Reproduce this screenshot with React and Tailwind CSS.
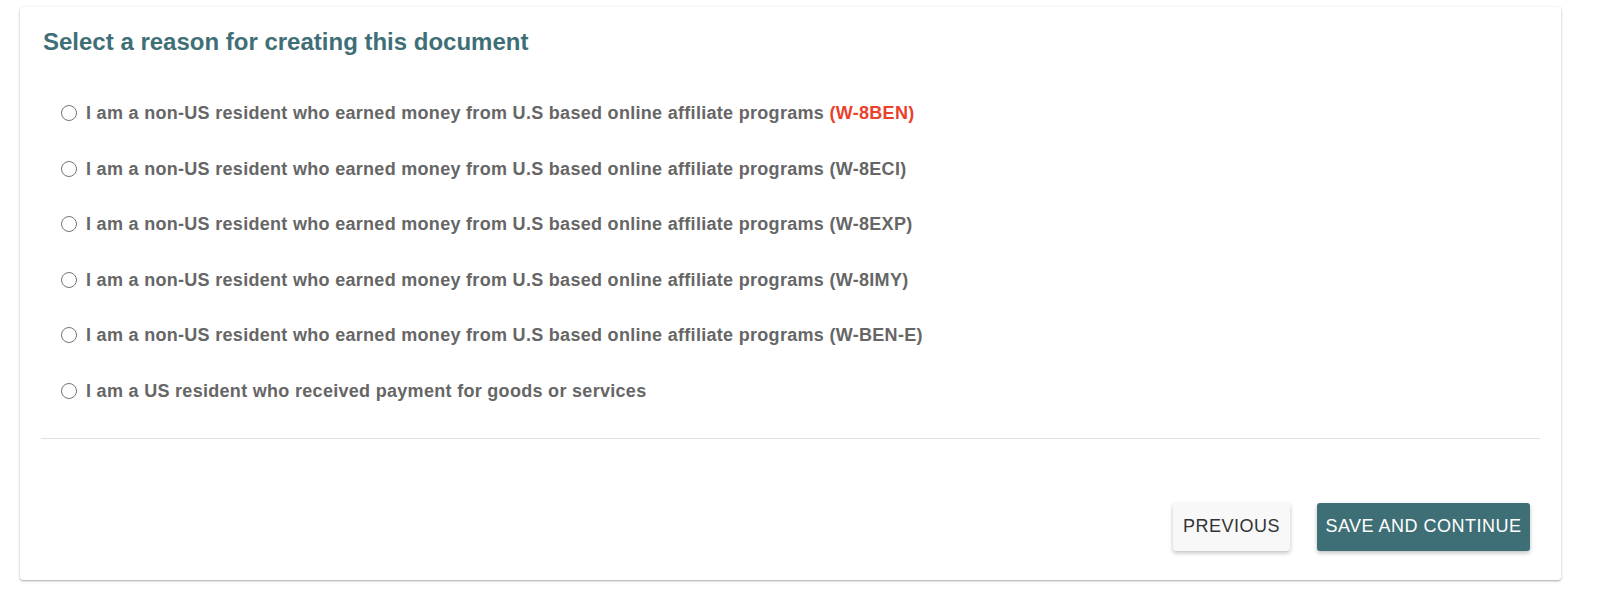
import React, { useState } from 'react';

const options = [
    { id: 'w8ben', text: 'I am a non-US resident who earned money from U.S based online affiliate programs', form: '(W-8BEN)', highlight: true },
    { id: 'w8eci', text: 'I am a non-US resident who earned money from U.S based online affiliate programs', form: '(W-8ECI)' },
    { id: 'w8exp', text: 'I am a non-US resident who earned money from U.S based online affiliate programs', form: '(W-8EXP)' },
    { id: 'w8imy', text: 'I am a non-US resident who earned money from U.S based online affiliate programs', form: '(W-8IMY)' },
    { id: 'wbene', text: 'I am a non-US resident who earned money from U.S based online affiliate programs', form: '(W-BEN-E)' },
    { id: 'w9', text: 'I am a US resident who received payment for goods or services' },
];

const App = () => {
    const [reason, setReason] = useState(null);

    return (
        <div className="min-h-[614px] bg-white pt-[7px] pl-[20px] font-['Liberation_Sans',Arial,sans-serif]">
            <div className="w-[1541px] h-[573px] bg-white rounded-[3px] shadow-[0_1px_3px_rgba(0,0,0,0.25),0_1px_1px_rgba(0,0,0,0.12)] px-[21px] pt-[21px] flex flex-col">
                <h2 className="ml-[2px] text-[24px] leading-[28px] font-bold text-[#3f6f76]">
                    Select a reason for creating this document
                </h2>

                {/* reason list */}
                <div className="mt-[46px] pl-[20px] flex flex-col gap-[33.6px]">
                    {options.map((opt) => (
                        <label key={opt.id} className="flex items-center gap-[9px] cursor-pointer h-[22px]">
                            <input
                                type="radio"
                                name="reason"
                                checked={reason === opt.id}
                                onChange={() => setReason(opt.id)}
                                className="w-[16px] h-[16px] m-0 accent-[#3f6f76]"
                            />
                            <span className="text-[18px] leading-[22px] tracking-[0.3px] font-bold text-[#666666]">
                                {opt.text}
                                {opt.form && (
                                    <span className={opt.highlight ? 'text-[#e8412c]' : ''}> {opt.form}</span>
                                )}
                            </span>
                        </label>
                    ))}
                </div>

                <div className="mt-[36px] border-t border-[#e0e0e0]" />

                <div className="mt-[64px] flex justify-end gap-[27px] pr-[10px]">
                    <button className="w-[117px] h-[48px] bg-[#f8f8f8] rounded-[3px] text-[18px] tracking-[0.5px] text-[#333] shadow-[0_2px_4px_rgba(0,0,0,0.25)]">
                        PREVIOUS
                    </button>
                    <button className="w-[213px] h-[48px] bg-[#3f6f76] rounded-[3px] text-[18px] tracking-[0.5px] text-white shadow-[0_2px_4px_rgba(0,0,0,0.25)]">
                        SAVE AND CONTINUE
                    </button>
                </div>
            </div>
        </div>
    );
};

export default App;
